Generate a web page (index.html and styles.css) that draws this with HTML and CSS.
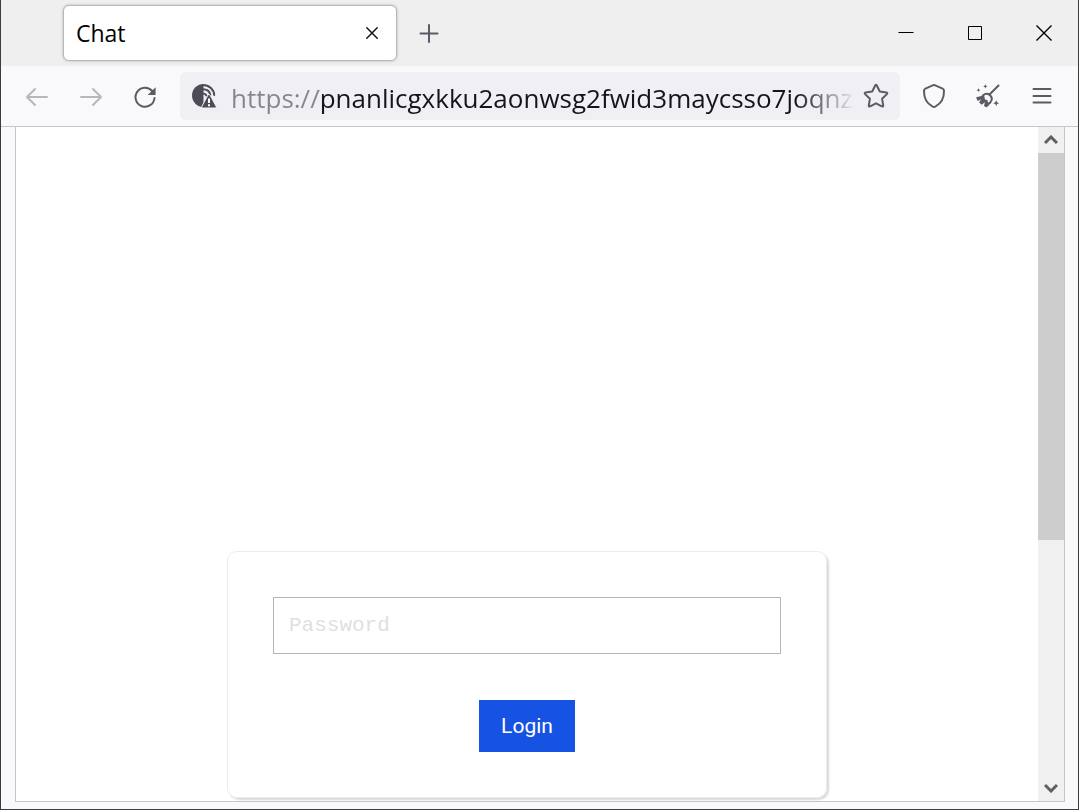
FILE: index.html
```html
<!DOCTYPE html>
<html lang="en">
<head>
<meta charset="UTF-8">
<title>Chat</title>
<meta name="viewport" content="width=device-width, initial-scale=1">
<link rel="stylesheet" href="styles.css">
</head>

<body>
  <div class="window">
    <header class="titlebar">
      <div class="tab">
        <span class="tab-title">Chat</span>
        <button class="tab-close" aria-label="Close tab">
          <svg width="12" height="12" viewBox="0 0 12 12"><path d="M.8.8l10.4 10.4M11.2.8L.8 11.2"/></svg>
        </button>
      </div>
      <button class="new-tab" aria-label="New tab">
        <svg width="20" height="20" viewBox="0 0 20 20"><path d="M10 2v17M1.500 10.500h17"/></svg>
      </button>
      <div class="win-controls">
        <button aria-label="Minimize"><svg width="16" height="16" viewBox="0 0 16 16"><path d="M.5 7.5h15"/></svg></button>
        <button aria-label="Maximize"><svg width="16" height="16" viewBox="0 0 16 16"><path d="M1.5 1.5h13v13h-13z"/></svg></button>
        <button aria-label="Close"><svg width="16" height="16" viewBox="0 0 16 16"><path stroke-width="1.400" d="M.5.5l15 15M15.5.5l-15 15"/></svg></button>
      </div>
    </header>

    <nav class="toolbar">
      <button class="nav-btn" aria-label="Back" disabled>
        <svg width="24" height="24" viewBox="0 0 24 24"><path d="M22 13H2M10 5l-8 8 8 8"/></svg>
      </button>
      <button class="nav-btn" aria-label="Forward" disabled>
        <svg width="24" height="24" viewBox="0 0 24 24"><path d="M2 13h20M14 5l8 8-8 8"/></svg>
      </button>
      <button class="nav-btn" aria-label="Reload">
        <svg width="24" height="26" viewBox="0 0 24 26"><path d="M19.200 8A9.500 9.500 0 1 0 21.500 15"/><path class="fill" d="M22.600 4.200v7.200a.7.7 0 0 1-.7.7h-7.200z"/></svg>
      </button>

      <div class="urlbar">
        <svg class="site-icon" width="26" height="26" viewBox="0 0 26 26">
          <path class="fill" d="M12.500 1a11.500 11.500 0 0 0 0 23z"/>
          <path d="M12 2c6.200 0 11 4.600 11.200 10M12 6.300c4.200 0 6.700 2.500 7.300 5.500M12 10.500c1.800 0 2.900.8 3.400 2"/>
          <path class="warn" d="M18 11.500q.8 0 1.200.8l6 11.200q.5 1.400-1 1.500H11.800q-1.500-.1-1-1.500l6-11.200q.4-.8 1.200-.8z"/>
          <path class="mark" d="M18 15.500v4.500M18 21.300v2"/>
        </svg>
        <input class="url" type="text" aria-label="Address" value="https://pnanlicgxkku2aonwsg2fwid3maycsso7joqnz">
        <button class="star" aria-label="Bookmark this page">
          <svg width="26" height="26" viewBox="0 0 26 26"><path d="M12.200 2.500q.8-1.300 1.600 0l3 6 6.600 1q1.500.4.500 1.600l-4.800 4.700 1.100 6.700q.1 1.500-1.300.9L13 20.300l-5.900 3.100q-1.400.6-1.300-.9l1.100-6.700-4.800-4.700q-1-1.200.5-1.600l6.600-1z"/></svg>
        </button>
      </div>

      <button class="nav-btn" aria-label="Security level">
        <svg width="24" height="26" viewBox="0 0 24 26"><path d="M12 1.900q-.7 0-1.300.5L3.400 5.600q-1.300.6-1.400 2c-.2 7 2.100 12.500 8.700 16q1.300.6 2.600 0c6.600-3.500 8.900-9 8.700-16q-.1-1.400-1.400-2l-7.300-3.200Q12.700 1.900 12 1.900z"/></svg>
      </button>
      <button class="nav-btn" aria-label="New identity">
        <svg width="24" height="24" viewBox="0 0 24 24">
          <path d="M22.500 1.500l-8.500 8.500"/>
          <path d="M7 11.500c2.500-2.500 5.500-2 7.300 0 1.900 2 1.800 5-.5 7.500"/>
          <path class="fill" d="M7.200 10.500C5.200 12.500 2.500 12.700.2 13.200c.2 1.500.8 2.700 1.700 3.700l3.200-1.700-2 3.400 2.600 2.200 3.200-2.600-.9 3.800c.8.7 1.800 1 2.800 1.200 1.500-1 3-2.500 3.800-4.400l-2.700-.6-.4-2.300-2.600-.5-.3-2.400z"/>
          <path class="fill" d="M9.300.2l.7 1.500 1.500.7-1.500.7-.7 1.500-.7-1.500-1.500-.7 1.500-.7zM2.500 4.300l.6 1.300 1.300.6-1.300.6-.6 1.300-.6-1.300-1.300-.6 1.300-.6zM20.200 16.300l.9 2 2 .9-2 .9-.9 2-.9-2-2-.9 2-.9z"/>
        </svg>
      </button>
      <button class="nav-btn" aria-label="Open application menu">
        <svg width="24" height="24" viewBox="0 0 24 24"><path d="M3.500 5h17M3.500 12h17M3.500 18.500h17"/></svg>
      </button>
    </nav>

    <div class="viewport">
      <main class="page">
        <form class="login">
          <input class="password" type="password" placeholder="Password" aria-label="Password">
          <button class="login-btn" type="button">Login</button>
        </form>
      </main>
      <div class="scrollbar">
        <button aria-label="Scroll up"><svg width="14" height="10" viewBox="0 0 14 10"><path d="M1 8L7 2l6 6"/></svg></button>
        <div class="track"><div class="thumb"></div></div>
        <button aria-label="Scroll down"><svg width="14" height="10" viewBox="0 0 14 10"><path d="M1 2l6 6 6-6"/></svg></button>
      </div>
    </div>
  </div>
</body>
</html>
```
FILE: styles.css
```css
:root{
  --chrome:#efefef;
  --toolbar:#f9f9fb;
  --field:#f0f0f4;
  --icon:#5b5b66;
  --line:#c6c6ca;
  --blue:#1753e3;
}
*{box-sizing:border-box;}
body{margin:0; font-family:"Open Sans", "Noto Sans", sans-serif; color:#15141a;}
button{
  border:0; padding:0; background:none; font:inherit; color:inherit;
  display:flex; align-items:center; justify-content:center;
}
svg{display:block; fill:none; stroke:currentColor; stroke-width:2; stroke-linecap:round; stroke-linejoin:round;}
svg .fill{fill:currentColor; stroke:none;}

.window{
  min-height:100vh; display:flex; flex-direction:column; background:var(--toolbar);
  border:1px solid #3c3c40; border-top:0;
}

/* title bar */
.titlebar{height:66px; display:flex; align-items:center; padding-left:62px; background:var(--chrome);}
.tab{
  width:334px; height:56px; display:flex; align-items:center; justify-content:space-between;
  padding:0 12px; background:#fff; border:1px solid #b8b8bc; border-radius:6px;
  box-shadow:0 0 3px rgba(0,0,0,.25);
}
.tab-title{font-size:23px; line-height:32px; color:#000;}
.tab-close{width:24px; height:24px;}
.tab-close svg{stroke-width:1.5;}
.new-tab{width:32px; height:32px; margin-left:16px; color:var(--icon);}
.win-controls{display:flex; margin-left:auto; color:#000;}
.win-controls button{width:69px; height:66px;}
.win-controls svg{stroke-width:1; stroke-linecap:butt; stroke-linejoin:miter;}

/* toolbar */
.toolbar{
  height:61px; display:flex; align-items:center; gap:6px; padding:0 12px;
  border-bottom:1px solid var(--line);
}
.nav-btn{width:48px; height:48px; flex:none; color:var(--icon);}
.nav-btn:disabled{color:#b7b7bd;}
.urlbar{
  flex:1; min-width:0; height:48px; display:flex; align-items:center; gap:14px;
  margin:0 4px 0 5px; padding:0 11px; background:var(--field); border-radius:6px;
}
.site-icon{flex:none; color:#4c4c57;}
.site-icon .warn{fill:currentColor; stroke:var(--field); stroke-width:1;}
.site-icon .mark{stroke:#fff; stroke-width:2; stroke-linecap:butt;}
.url{
  flex:1; min-width:0; height:44px; padding:3px 0 0; border:0; outline:0;
  font-family:inherit; font-size:26px; color:transparent;
  /* protocol in grey, host in black, tail fading out */
  background:linear-gradient(90deg, #85858c 88px, #15141a 88px, #15141a calc(100% - 60px), transparent);
  -webkit-background-clip:text; background-clip:text;
}
.star{flex:none; margin-left:-6px; color:var(--icon);}

/* page area */
.viewport{
  flex:1; display:flex; margin:0 13px 7px 14px; background:#fff;
  border:1px solid var(--line); border-top:0;
}
.page{flex:1; display:flex; align-items:flex-end; justify-content:center; padding:424px 16px 3px;}
.login{
  width:600px; max-width:100%; display:flex; flex-direction:column; align-items:center; gap:46px;
  padding:45px; border:1px solid #ececec; border-radius:10px;
  box-shadow:2px 2px 2px rgba(0,0,0,.15);
}
.password{
  width:100%; height:57px; padding:0 15px; border:1px solid #b5b5b5; background:#fff;
  font-family:"Liberation Mono", monospace; font-size:21px;
}
.password::placeholder{color:#dfdfdf; opacity:1;}
.login-btn{
  height:52px; padding:0 22px; background:var(--blue); color:#fff;
  font-family:Roboto, sans-serif; font-size:21px;
}

/* scrollbar */
.scrollbar{width:26px; display:flex; flex-direction:column; background:#f0f0f0; color:#606060;}
.scrollbar button{height:26px;}
.scrollbar svg{stroke-width:3; stroke-linecap:butt; stroke-linejoin:miter;}
.track{flex:1;}
.thumb{height:387px; background:#cdcdcd;}
```
